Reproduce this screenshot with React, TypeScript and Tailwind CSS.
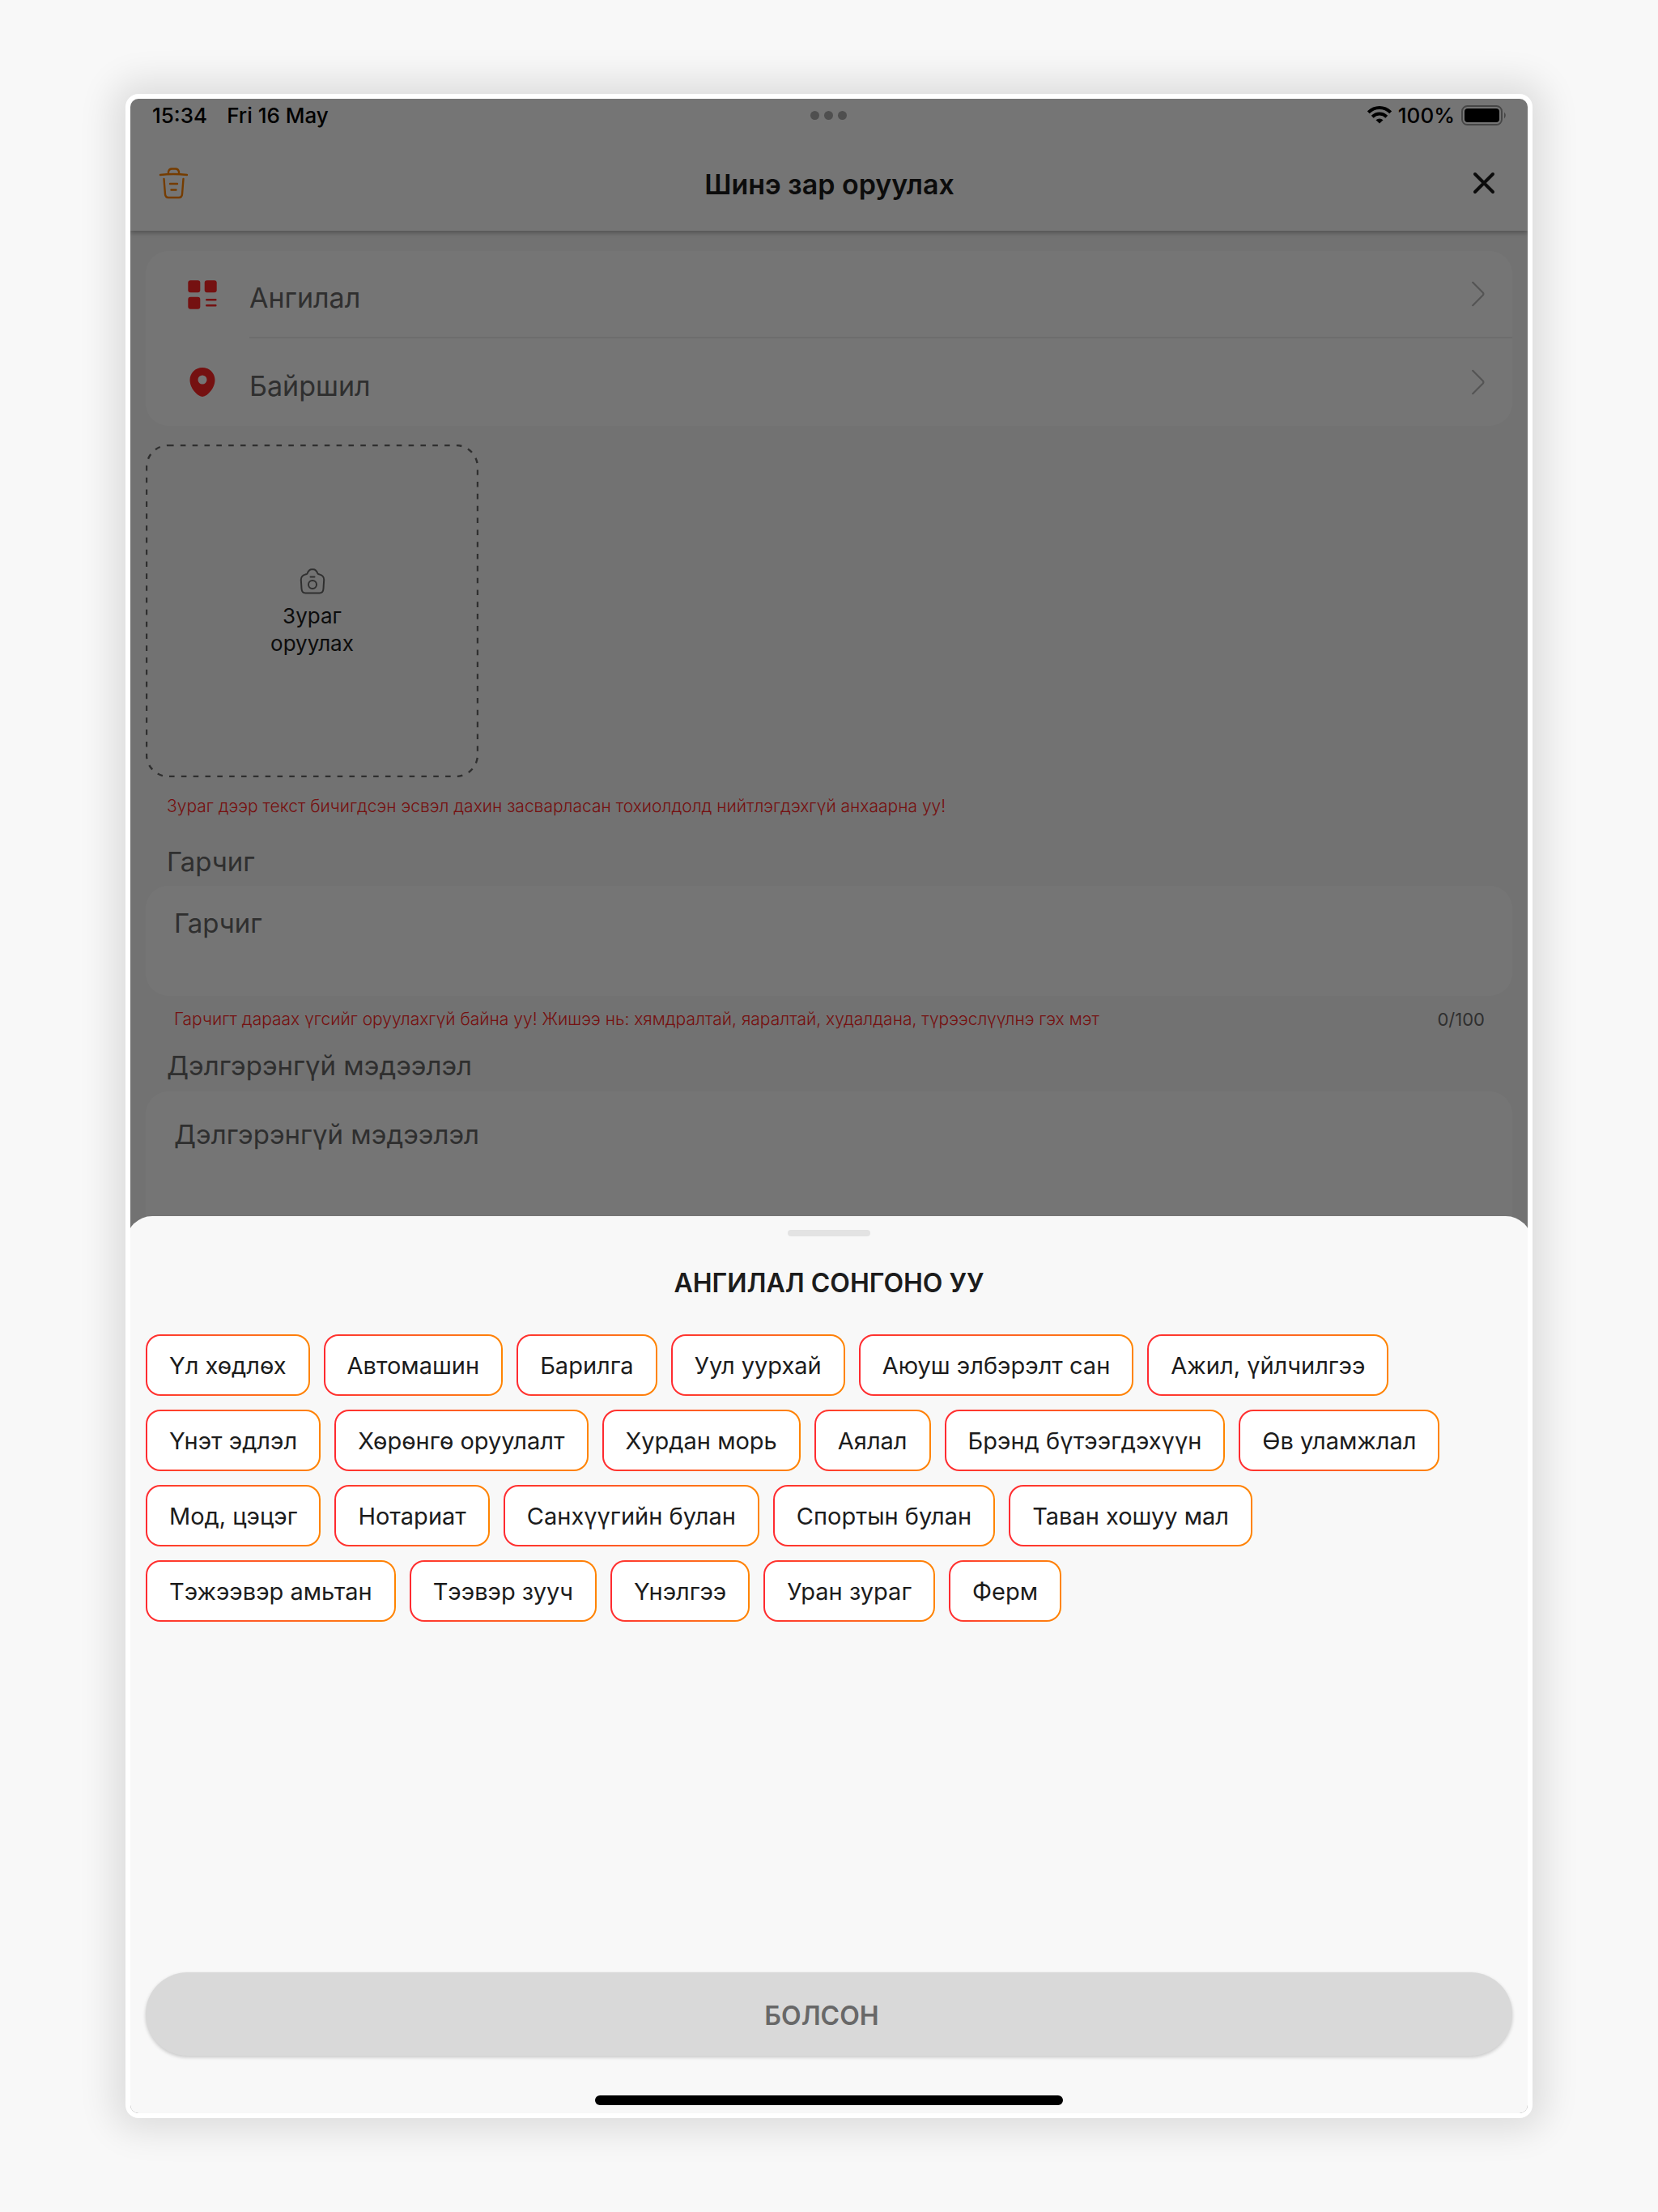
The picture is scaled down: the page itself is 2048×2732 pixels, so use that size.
import React from "react";

const categories = [
  ["Үл хөдлөх", "Автомашин", "Барилга", "Уул уурхай", "Аюуш элбэрэлт сан", "Ажил, үйлчилгээ"],
  ["Үнэт эдлэл", "Хөрөнгө оруулалт", "Хурдан морь", "Аялал", "Брэнд бүтээгдэхүүн", "Өв уламжлал"],
  ["Мод, цэцэг", "Нотариат", "Санхүүгийн булан", "Спортын булан", "Таван хошуу мал"],
  ["Тэжээвэр амьтан", "Тээвэр зууч", "Үнэлгээ", "Уран зураг", "Ферм"],
];

function TrashIcon() {
  return (
    <svg className="h-10 w-9" viewBox="0 0 36 40" fill="none" stroke="#ff8400" strokeWidth="2.4" strokeLinecap="round" strokeLinejoin="round" aria-hidden="true">
      <path d="M2 10Q18 8 35 10" />
      <path d="M12 8.500V6Q13 2.500 16 2.500H21Q24 2.500 25 6V8.500" />
      <path d="M6.500 15L8 34Q8.500 38 12 38H25Q28.500 38 29 34L30.500 15" />
      <path d="M14 21H23M15.500 28.500H21.500" />
    </svg>
  );
}

function CloseIcon() {
  return (
    <svg className="h-8 w-8" viewBox="0 0 32 32" fill="none" stroke="#1c1c1c" strokeWidth="4" strokeLinecap="round" aria-hidden="true">
      <path d="M5 5L27 27M27 5L5 27" />
    </svg>
  );
}

function GridIcon() {
  return (
    <svg className="h-9 w-9" viewBox="0 0 36 36" fill="#ff2626" aria-hidden="true">
      <rect x="0.300" y="0.300" width="15" height="15" rx="3" />
      <rect x="20.700" y="0.300" width="15" height="15" rx="3" />
      <rect x="0.300" y="20.700" width="15" height="15" rx="3" />
      <path d="M23.200 24.200H34.400M23.200 31.200H34.400" stroke="#ff2626" strokeWidth="2.400" strokeLinecap="round" />
    </svg>
  );
}

function PinIcon() {
  return (
    <svg className="h-9 w-9" viewBox="0 0 36 36" aria-hidden="true">
      <path fill="#ff2626" fillRule="evenodd" d="M18 0C9.200 0 2.500 6.800 2.500 15.500C2.500 22.500 7 29.500 12.500 33.800Q18 38 23.500 33.800C29 29.500 33.500 22.500 33.500 15.500C33.500 6.800 26.800 0 18 0ZM18 9.500A5.500 5.500 0 1 1 18 20.500A5.500 5.500 0 1 1 18 9.500Z" />
    </svg>
  );
}

function ChevronIcon() {
  return (
    <svg className="h-8 w-4" viewBox="0 0 16 32" fill="none" stroke="#b8b8b8" strokeWidth="2.200" strokeLinecap="round" strokeLinejoin="round" aria-hidden="true">
      <path d="M1.200 1.800L13.600 14.200Q15.200 16 13.600 17.800L1.200 30.200" />
    </svg>
  );
}

function CameraIcon() {
  return (
    <svg className="h-8 w-8" viewBox="0 0 32 32" fill="none" stroke="#686868" strokeWidth="2" strokeLinecap="round" strokeLinejoin="round" aria-hidden="true">
      <path d="M9.500 6.500Q11.500 1.200 15 1.200H17Q20.500 1.200 22.500 6.500Q23 7.200 25 7.600Q30.200 9 30.200 14L29.500 25Q29.200 30.500 24.500 30.500H7.500Q2.800 30.500 2.500 25L1.800 14Q1.800 9 7 7.600Q9 7.200 9.500 6.500Z" />
      <circle cx="16" cy="20" r="5" />
      <path d="M13.500 10.500H18.500" />
    </svg>
  );
}

function WifiIcon() {
  return (
    <svg className="h-[22px] w-[30px]" viewBox="0 0 30 22" fill="none" stroke="#000" strokeWidth="4" aria-hidden="true">
      <path d="M1.300 7.800Q7.200 2 15 2Q22.800 2 28.700 7.800" />
      <path d="M6.200 13.200Q10 9.500 15 9.500Q20 9.500 23.800 13.200" />
      <path d="M10.500 17.200Q15 13.600 19.500 17.200L15 21.600Z" fill="#000" stroke="none" />
    </svg>
  );
}

function BatteryIcon() {
  return (
    <svg className="h-[25px] w-[57px]" viewBox="0 0 57 25" aria-hidden="true">
      <rect x="1" y="1" width="49" height="23" rx="6.500" fill="none" stroke="#9a9a9a" strokeWidth="2" />
      <rect x="4" y="4" width="43" height="17" rx="4" fill="#000" />
      <path d="M53 8.500Q56.500 12.500 53 16.500Z" fill="#9a9a9a" />
    </svg>
  );
}

function PickerRow({ icon, label, divided }: { icon: React.ReactNode; label: string; divided?: boolean }) {
  return (
    <button type="button" className="flex h-[108px] w-full items-center pl-[52px] text-left text-[34px] text-[#686868]">
      <span className="w-[76px] shrink-0">{icon}</span>
      <span className={divided ? "flex h-full grow items-center justify-between border-b-2 border-[#ededed] pr-[34px]" : "flex h-full grow items-center justify-between pr-[34px]"}>
        <span className="pt-2">{label}</span>
        <ChevronIcon />
      </span>
    </button>
  );
}

export default function App() {
  return (
    <div className="flex min-h-screen flex-col bg-[#f8f8f8] px-[155px] py-[116px] font-['Inter',sans-serif] text-[#1c1c1c]">
      <div className="relative flex grow flex-col overflow-hidden rounded-2xl border-6 border-white bg-[#f8f8f8] shadow-[0_0_44px_16px_rgba(0,0,0,0.11)]">
        <header className="relative bg-white shadow-[0_3px_5px_rgba(0,0,0,0.25)]">
          <div className="grid h-10 grid-cols-3 items-center px-[25px] text-[26px] font-medium text-black">
            <div className="flex gap-6 pl-0.5">
              <span>15:34</span>
              <span>Fri 16 May</span>
            </div>
            <div className="flex justify-center gap-1.5">
              <span className="size-[11px] rounded-full bg-[#adadad]" />
              <span className="size-[11px] rounded-full bg-[#adadad]" />
              <span className="size-[11px] rounded-full bg-[#adadad]" />
            </div>
            <div className="flex items-center justify-end gap-2">
              <WifiIcon />
              <span>100%</span>
              <BatteryIcon />
            </div>
          </div>
          <div className="flex h-[123px] items-center justify-between pt-1 pr-[38px] pl-[35px]">
            <button type="button" aria-label="Устгах"><TrashIcon /></button>
            <h1 className="pt-1 text-[34px] font-semibold">Шинэ зар оруулах</h1>
            <button type="button" aria-label="Хаах"><CloseIcon /></button>
          </div>
        </header>

        <main className="flex flex-col px-[19px] pt-[25px]">
          <section className="rounded-[28px] bg-white">
            <PickerRow icon={<GridIcon />} label="Ангилал" divided />
            <PickerRow icon={<PinIcon />} label="Байршил" />
          </section>

          <button type="button" className="relative mt-[23px] flex size-[411px] flex-col items-center justify-center pt-1 text-[26px] leading-[34px]">
            <svg className="absolute inset-0 h-full w-full" fill="none" aria-hidden="true">
              <rect x="1" y="1" width="409" height="409" rx="27" stroke="#686868" strokeWidth="2.400" strokeDasharray="6.600 8.230" />
            </svg>
            <CameraIcon />
            <span className="mt-2.5 w-28">Зураг оруулах</span>
          </button>

          <p className="mt-[18px] ml-[26px] text-[21px] leading-[36px] font-light text-[#ff2626]">
            Зураг дээр текст бичигдсэн эсвэл дахин засварласан тохиолдолд нийтлэгдэхгүй анхаарна уу!
          </p>

          <label htmlFor="title" className="mt-[30px] ml-[26px] text-[33px] leading-10 text-[#686868]">Гарчиг</label>
          <input id="title" placeholder="Гарчиг" className="mt-2.5 h-[136px] rounded-[28px] bg-white px-[35px] pb-11 text-[33px] placeholder:text-[#686868]" />
          <div className="mt-[11px] flex items-center justify-between pr-[34px] pl-[35px] text-[21px] leading-[36px]">
            <p className="font-light text-[#ff2626]">
              Гарчигт дараах үгсийг оруулахгүй байна уу! Жишээ нь: хямдралтай, яаралтай, худалдана, түрээслүүлнэ гэх мэт
            </p>
            <span className="text-[22px] text-[#686868]">0/100</span>
          </div>

          <label htmlFor="details" className="mt-[19px] ml-[26px] text-[33px] leading-10 text-[#686868]">Дэлгэрэнгүй мэдээлэл</label>
          <textarea id="details" placeholder="Дэлгэрэнгүй мэдээлэл" className="mt-3 h-[300px] resize-none rounded-[28px] bg-white px-[35px] pt-[33px] text-[33px] leading-10 placeholder:text-[#686868]" />
        </main>

        <div className="absolute inset-0 flex flex-col justify-end bg-black/54">
          <section role="dialog" aria-labelledby="sheet-title" className="-mx-[5px] flex min-h-[1108px] flex-col items-center rounded-t-[32px] bg-[#f8f8f8] px-6 pb-2.5">
            <div className="mt-[17px] h-2 w-[102px] rounded-full bg-[#e3e3e3]" />
            <h2 id="sheet-title" className="mt-[38px] text-[32px] leading-10 font-semibold">АНГИЛАЛ СОНГОНО УУ</h2>
            <div className="mt-[43px] flex grow flex-col gap-[17px] self-stretch">
              {categories.map((row) => (
                <div key={row[0]} className="flex flex-wrap gap-[17px]">
                  {row.map((name) => (
                    <button key={name} type="button" className="flex rounded-[18px] bg-linear-to-r from-[#ff2a30] to-[#ff8400] p-0.5">
                      <span className="rounded-2xl bg-white px-[27px] pt-[17px] pb-[15px] text-[29px] leading-10">{name}</span>
                    </button>
                  ))}
                </div>
              ))}
            </div>
            <button type="button" className="h-[103px] self-stretch rounded-full bg-[#d9d9d9] pt-1 pr-[18px] text-[32px] font-semibold text-[#686868] shadow-[0_2px_4px_rgba(0,0,0,0.2)]">
              БОЛСОН
            </button>
            <div className="mt-[49px] h-3 w-[578px] rounded-full bg-black" />
          </section>
        </div>
      </div>
    </div>
  );
}
